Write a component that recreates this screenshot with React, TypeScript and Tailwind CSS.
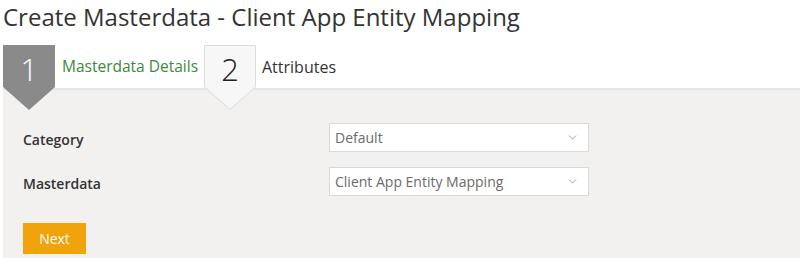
import { ChevronDown } from "lucide-react";

const font = { fontFamily: "'Open Sans', 'Noto Sans', Arial, sans-serif" };

function StepBadge({ n, active }: { n: number; active: boolean }) {
  return (
    <div className="relative h-[43px] w-[52px] shrink-0">
      <svg className="absolute left-0 top-0 z-10 overflow-visible" width="52" height="65" viewBox="0 0 52 65">
        {active ? (
          <polygon points="0,0 52,0 52,42 26,65 0,42" fill="#8a8a8a" />
        ) : (
          <polygon points="0.5,0.5 51.5,0.5 51.5,42 26,64.5 0.5,42" fill="#f7f7f7" stroke="#dcdcdc" />
        )}
      </svg>
      <span
        className={`absolute left-0 top-[4px] z-20 flex w-full justify-center text-[31px] leading-[40px] font-light ${
          active ? "text-white" : "text-[#222]"
        }`}
      >
        {n}
      </span>
    </div>
  );
}

function Select({ value }: { value: string }) {
  return (
    <div className="flex h-[29px] w-[260px] items-center justify-between border border-[#d9d9d9] bg-white pl-[5px] pr-[9px]">
      <span className="text-[14px] text-[#6b6b6b]">{value}</span>
      <ChevronDown className="h-[13px] w-[13px] text-[#8a8a8a]" strokeWidth={1.5} />
    </div>
  );
}

export default function App() {
  return (
    <div className="h-[258px] w-[800px] overflow-hidden bg-white" style={font}>
      <h1 className="pl-[3px] pt-[1px] text-[24px] leading-[32px] text-[#333]">
        Create Masterdata - Client App Entity Mapping
      </h1>

      <div className="mt-[12px] flex h-[43px] items-center pl-[3px]">
        <StepBadge n={1} active />
        <span className="ml-[7px] w-[142px] text-[15.5px] text-[#3c8a3c]">Masterdata Details</span>
        <StepBadge n={2} active={false} />
        <span className="ml-[6px] text-[16px] text-[#333]">Attributes</span>
      </div>

      <div className="ml-[3px] h-[170px] border-t-2 border-[#e6e6e6] bg-[#f2f1f0] pl-[20px] pt-[33px]">
        <div className="flex flex-col gap-[15px]">
          <div className="flex items-center">
            <span className="w-[306px] pt-[4px] text-[14px] font-semibold text-[#333]">Category</span>
            <Select value="Default" />
          </div>
          <div className="flex items-center">
            <span className="w-[306px] pt-[4px] text-[14px] font-semibold text-[#333]">Masterdata</span>
            <Select value="Client App Entity Mapping" />
          </div>
        </div>
        <button className="mt-[27px] flex h-[31px] w-[63px] items-center justify-center bg-[#f0a30a] text-[14px] text-white">
          Next
        </button>
      </div>
    </div>
  );
}
